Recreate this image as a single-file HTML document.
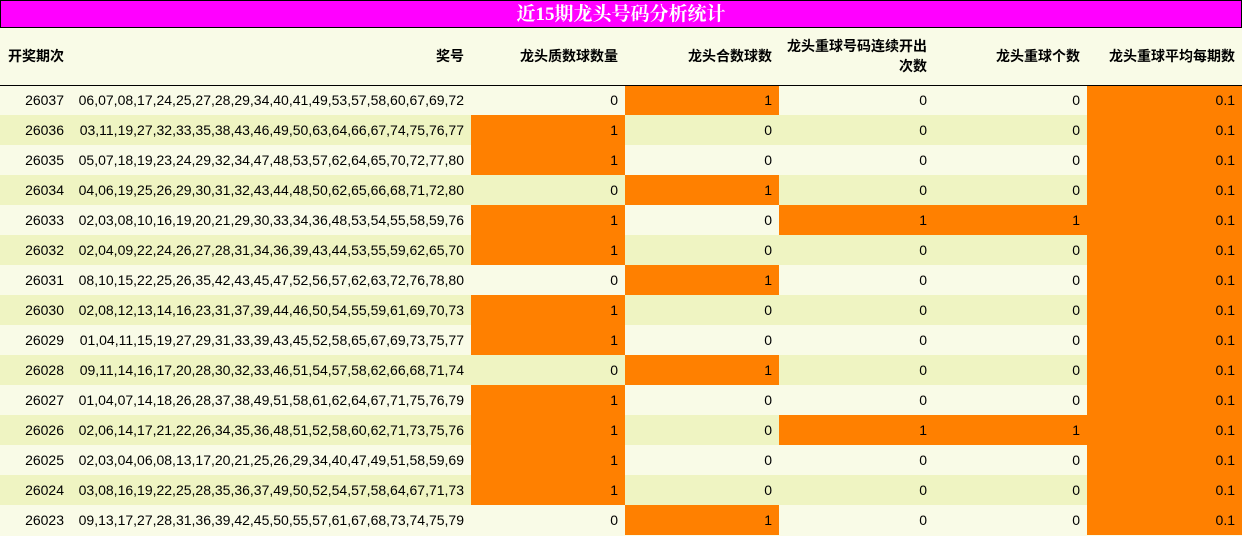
<html><head><style>
body{margin:0;width:1242px;height:536px;background:#f9fbe7;font-family:"Liberation Sans","Noto Sans CJK SC",sans-serif;overflow:hidden}
.t{position:absolute;left:0;top:0;width:1240px;height:26px;background:#ff00ff;border:1px solid #000;color:#fff;font-weight:bold;font-size:19px;text-align:center;line-height:27px;font-family:"Liberation Serif","Noto Serif CJK SC",serif}
table{position:absolute;left:0;top:28px;border-collapse:collapse;table-layout:fixed;width:1242px;font-size:14px}
th{height:57px;font-size:14px;text-align:right;padding:0 7px;border-bottom:1px solid #000;line-height:20px;background:#f9fbe7}
th:first-child{text-align:left;padding:0 0 0 8px;white-space:nowrap}
td{height:30px;padding:0 7px;text-align:right;white-space:nowrap}
tr:nth-child(odd) td{background:#eff4c2}
tr td.o{background:#ff8000!important}
</style></head><body>
<div class="t">近15期龙头号码分析统计</div>
<table>
<colgroup><col style="width:71px"><col style="width:400px"><col style="width:154px"><col style="width:154px"><col style="width:155px"><col style="width:153px"><col style="width:155px"></colgroup>
<tr><th>开奖期次</th><th>奖号</th><th>龙头质数球数量</th><th>龙头合数球数</th><th>龙头重球号码连续开出次数</th><th>龙头重球个数</th><th>龙头重球平均每期数</th></tr>
<tr><td>26037</td><td>06,07,08,17,24,25,27,28,29,34,40,41,49,53,57,58,60,67,69,72</td><td>0</td><td class="o">1</td><td>0</td><td>0</td><td class="o">0.1</td></tr>
<tr><td>26036</td><td>03,11,19,27,32,33,35,38,43,46,49,50,63,64,66,67,74,75,76,77</td><td class="o">1</td><td>0</td><td>0</td><td>0</td><td class="o">0.1</td></tr>
<tr><td>26035</td><td>05,07,18,19,23,24,29,32,34,47,48,53,57,62,64,65,70,72,77,80</td><td class="o">1</td><td>0</td><td>0</td><td>0</td><td class="o">0.1</td></tr>
<tr><td>26034</td><td>04,06,19,25,26,29,30,31,32,43,44,48,50,62,65,66,68,71,72,80</td><td>0</td><td class="o">1</td><td>0</td><td>0</td><td class="o">0.1</td></tr>
<tr><td>26033</td><td>02,03,08,10,16,19,20,21,29,30,33,34,36,48,53,54,55,58,59,76</td><td class="o">1</td><td>0</td><td class="o">1</td><td class="o">1</td><td class="o">0.1</td></tr>
<tr><td>26032</td><td>02,04,09,22,24,26,27,28,31,34,36,39,43,44,53,55,59,62,65,70</td><td class="o">1</td><td>0</td><td>0</td><td>0</td><td class="o">0.1</td></tr>
<tr><td>26031</td><td>08,10,15,22,25,26,35,42,43,45,47,52,56,57,62,63,72,76,78,80</td><td>0</td><td class="o">1</td><td>0</td><td>0</td><td class="o">0.1</td></tr>
<tr><td>26030</td><td>02,08,12,13,14,16,23,31,37,39,44,46,50,54,55,59,61,69,70,73</td><td class="o">1</td><td>0</td><td>0</td><td>0</td><td class="o">0.1</td></tr>
<tr><td>26029</td><td>01,04,11,15,19,27,29,31,33,39,43,45,52,58,65,67,69,73,75,77</td><td class="o">1</td><td>0</td><td>0</td><td>0</td><td class="o">0.1</td></tr>
<tr><td>26028</td><td>09,11,14,16,17,20,28,30,32,33,46,51,54,57,58,62,66,68,71,74</td><td>0</td><td class="o">1</td><td>0</td><td>0</td><td class="o">0.1</td></tr>
<tr><td>26027</td><td>01,04,07,14,18,26,28,37,38,49,51,58,61,62,64,67,71,75,76,79</td><td class="o">1</td><td>0</td><td>0</td><td>0</td><td class="o">0.1</td></tr>
<tr><td>26026</td><td>02,06,14,17,21,22,26,34,35,36,48,51,52,58,60,62,71,73,75,76</td><td class="o">1</td><td>0</td><td class="o">1</td><td class="o">1</td><td class="o">0.1</td></tr>
<tr><td>26025</td><td>02,03,04,06,08,13,17,20,21,25,26,29,34,40,47,49,51,58,59,69</td><td class="o">1</td><td>0</td><td>0</td><td>0</td><td class="o">0.1</td></tr>
<tr><td>26024</td><td>03,08,16,19,22,25,28,35,36,37,49,50,52,54,57,58,64,67,71,73</td><td class="o">1</td><td>0</td><td>0</td><td>0</td><td class="o">0.1</td></tr>
<tr><td>26023</td><td>09,13,17,27,28,31,36,39,42,45,50,55,57,61,67,68,73,74,75,79</td><td>0</td><td class="o">1</td><td>0</td><td>0</td><td class="o">0.1</td></tr>
</table>
</body></html>
